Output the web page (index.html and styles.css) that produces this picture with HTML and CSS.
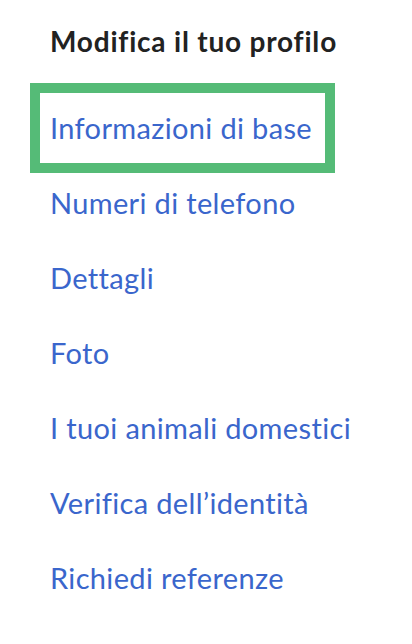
FILE: index.html
```html
<!DOCTYPE html>
<html lang="it">
<head>
<meta charset="utf-8">
<link rel="stylesheet" href="styles.css">
</head>
<body>
<nav class="profile-nav">
  <h2 class="nav-title">Modifica il tuo profilo</h2>
  <ul class="nav-list">
    <li class="nav-item"><a class="nav-link is-highlighted" href="#">Informazioni di base</a></li>
    <li class="nav-item"><a class="nav-link" href="#">Numeri di telefono</a></li>
    <li class="nav-item"><a class="nav-link" href="#">Dettagli</a></li>
    <li class="nav-item"><a class="nav-link" href="#">Foto</a></li>
    <li class="nav-item"><a class="nav-link" href="#">I tuoi animali domestici</a></li>
    <li class="nav-item"><a class="nav-link" href="#">Verifica dell’identità</a></li>
    <li class="nav-item"><a class="nav-link" href="#">Richiedi referenze</a></li>
  </ul>
</nav>
</body>
</html>
```
FILE: styles.css
```css
html, body {
  margin: 0;
  padding: 0;
  background: #ffffff;
}
body {
  font-family: Lato, "Noto Sans", sans-serif;
  font-variant-ligatures: none;
}
.profile-nav {
  padding: 21px 0 0 50px;
}
.nav-title {
  margin: 0 0 32px;
  font-size: 28px;
  line-height: 40px;
  font-weight: 700;
  letter-spacing: 0.8px;
  color: #222222;
}
.nav-list {
  list-style: none;
  margin: 0;
  padding: 0;
}
.nav-item {
  height: 75px;
}
.nav-link {
  display: inline-block;
  height: 70px;
  line-height: 70px;
  font-size: 29px;
  letter-spacing: 0.35px;
  color: #3a66cc;
  text-decoration: none;
  padding: 0 13px 0 10px;
  margin-left: -10px;
}
.nav-link.is-highlighted {
  outline: 10px solid #55bb77;
}
```
